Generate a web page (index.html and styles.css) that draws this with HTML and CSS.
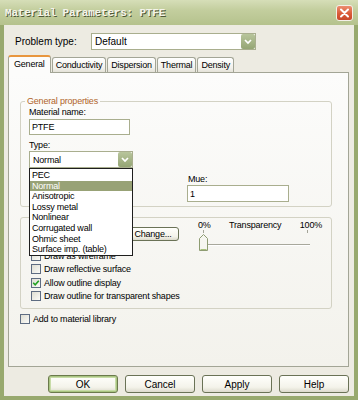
FILE: index.html
```html
<!DOCTYPE html>
<html>
<head>
<meta charset="utf-8">
<link rel="stylesheet" href="styles.css">
</head>
<body>
<div class="window">
  <div class="titlebar">
    <span class="title">Material Parameters: PTFE</span>
    <span class="close"><svg width="15" height="14" viewBox="0 0 15 14"><path d="M4 3.5 L11 10.5 M11 3.5 L4 10.5" stroke="#fff" stroke-width="2" stroke-linecap="round"/></svg></span>
  </div>
  <div class="client">
    <div class="problem-row">
      <span class="problem-label">Problem type:</span>
      <div class="combo combo-wide"><span class="combo-text">Default</span><span class="combo-btn"><svg width="14" height="15" viewBox="0 0 14 15"><path d="M4 6 L7 9 L10 6" fill="none" stroke="#fff" stroke-width="1.7"/></svg></span></div>
    </div>
    <div class="tabs">
      <div class="tab tab-active">General</div>
      <div class="tab">Conductivity</div>
      <div class="tab">Dispersion</div>
      <div class="tab">Thermal</div>
      <div class="tab">Density</div>
    </div>
    <div class="panel">
      <fieldset class="group group-general">
        <legend class="group-legend">General properties</legend>
        <span class="field-label">Material name:</span>
        <div class="text-input input-name">PTFE</div>
        <span class="field-label label-type">Type:</span>
        <div class="combo combo-type"><span class="combo-text">Normal</span><span class="combo-btn"><svg width="14" height="15" viewBox="0 0 14 15"><path d="M4 6 L7 9 L10 6" fill="none" stroke="#fff" stroke-width="1.7"/></svg></span></div>
        <div class="row-three">
          <div class="cell-empty"></div>
          <div class="cell-mue">
            <span class="field-label">Mue:</span>
            <div class="text-input input-mue">1</div>
          </div>
        </div>
      </fieldset>
      <div class="group group-display">
        <div class="display-top">
          <div class="btn btn-change">Change...</div>
          <div class="slider">
            <div class="slider-labels"><span>0%</span><span>Transparency</span><span>100%</span></div>
            <svg class="slider-svg" width="124" height="21" viewBox="0 0 124 21">
              <path d="M5.5 0 V3 M109.5 0 V3" stroke="#A4A498" stroke-width="1"/>
              <path d="M5 14.5 H112" stroke="#A8A89C" stroke-width="1"/>
              <path d="M5 15.5 H112" stroke="#FFFFFF" stroke-width="1"/>
              <polygon points="5.5,4.5 9.5,8.5 9.5,20.5 1.5,20.5 1.5,8.5" fill="#F6F6F0" stroke="#8E9C72" stroke-width="1"/>
              <path d="M2.5 19.5 H8.5" stroke="#A8C07C" stroke-width="1"/>
            </svg>
          </div>
        </div>
        <div class="check-row"><span class="cb"></span><span>Draw as wireframe</span></div>
        <div class="check-row"><span class="cb"></span><span>Draw reflective surface</span></div>
        <div class="check-row"><span class="cb cb-checked"><svg width="8" height="8" viewBox="0 0 8 8"><path d="M1.2 3.8 L3.2 5.8 L6.8 1.8" fill="none" stroke="#21A121" stroke-width="1.6"/></svg></span><span>Allow outline display</span></div>
        <div class="check-row"><span class="cb"></span><span>Draw outline for transparent shapes</span></div>
      </div>
      <div class="check-row check-lib"><span class="cb"></span><span>Add to material library</span></div>
    </div>
    <div class="buttons">
      <div class="btn btn-dialog btn-default">OK</div>
      <div class="btn btn-dialog">Cancel</div>
      <div class="btn btn-dialog">Apply</div>
      <div class="btn btn-dialog">Help</div>
    </div>
  </div>
  <ul class="dropdown">
    <li>PEC</li>
    <li class="selected">Normal</li>
    <li>Anisotropic</li>
    <li>Lossy metal</li>
    <li>Nonlinear</li>
    <li>Corrugated wall</li>
    <li>Ohmic sheet</li>
    <li>Surface imp. (table)</li>
  </ul>
</div>
</body>
</html>
```

FILE: styles.css
```css
* { box-sizing: border-box; }
html, body { margin: 0; padding: 0; }
body {
  width: 358px;
  height: 400px;
  overflow: hidden;
  font-family: "Liberation Sans", Arial, sans-serif;
  font-size: 9px;
  letter-spacing: -0.2px;
  color: #000;
  background: #EDEBE2;
}
.window {
  position: relative;
  width: 358px;
  height: 400px;
  display: flex;
  flex-direction: column;
}
.titlebar {
  height: 25px;
  flex: none;
  display: flex;
  align-items: center;
  justify-content: space-between;
  padding: 0 5px 0 5px;
  background: linear-gradient(#D6DEB8, #C3CE9E 40%, #B5C28D);
}
.title {
  font-family: "Liberation Mono", "DejaVu Sans Mono", monospace;
  font-weight: bold;
  font-size: 11px;
  letter-spacing: -0.2px;
  color: #F4F4EA;
  text-shadow: 1px 1px 0 #4E5836;
}
.close {
  width: 17px;
  height: 16px;
  border: 1px solid #F4F0E8;
  border-radius: 3px;
  background: linear-gradient(#EC8E70, #DA5A38 55%, #C8482A);
  display: flex;
  align-items: center;
  justify-content: center;
}
.client {
  flex: 1;
  display: flex;
  flex-direction: column;
  padding: 8px 0 3px 0;
  border: 4px solid #98A96E;
  border-top: none;
  background: #EDEBE2;
}
.problem-row {
  display: flex;
  align-items: center;
  height: 17px;
  padding-left: 11px;
  font-size: 10px;
  letter-spacing: 0;
}
.problem-label { width: 76px; }
.combo {
  height: 17px;
  border: 1px solid #A9AE8E;
  background: #fff;
  display: flex;
  align-items: center;
  justify-content: space-between;
}
.combo-text { padding-left: 3px; }
.combo-btn {
  width: 14px;
  height: 15px;
  border-radius: 2px;
  background: linear-gradient(#B8C59C, #A3B284 60%, #94A574);
  display: flex;
}
.combo-wide { width: 165px; }
.tabs {
  display: flex;
  align-items: flex-end;
  gap: 1px;
  height: 18px;
  margin: 5px 0 -1px 4px;
  position: relative;
  z-index: 1;
}
.tab {
  height: 15px;
  margin-bottom: 1px;
  padding: 0 3px;
  border: 1px solid #A3A596;
  border-bottom: none;
  border-radius: 3px 3px 0 0;
  background: linear-gradient(#FFFFFF, #F2F1EC 70%, #E4E2D8);
  display: flex;
  align-items: center;
}
.tab-active {
  height: 18px;
  margin-bottom: 0;
  padding: 0 5px 2px 5px;
  border-top: 2px solid #E8963E;
  background: #FCFCFB;
}
.panel {
  margin-left: 4px;
  width: 341px;
  height: 295px;
  border: 1px solid #A3A596;
  background: linear-gradient(#FCFCFB, #F3F2EC);
  padding: 23px 0 0 11px;
}
.group {
  width: 312px;
  margin: 0;
  border: 1px solid #D3D2C4;
  border-radius: 3px;
}
.group-general {
  padding: 0 8px 4px 8px;
}
.group-legend {
  padding: 0 2px;
  margin-left: -4px;
  line-height: 11px;
  color: #B0642A;
}
.field-label {
  display: block;
  line-height: 11px;
}
.text-input {
  border: 1px solid #A9AE8E;
  background: #fff;
  display: flex;
  align-items: center;
  padding-left: 2px;
}
.input-name {
  width: 101px;
  height: 16px;
  margin-top: 1px;
}
.label-type { margin-top: 5px; }
.combo-type { width: 104px; }
.row-three {
  display: grid;
  grid-template-columns: 104px 102px;
  column-gap: 54px;
  margin-top: 6px;
}
.input-mue {
  width: 102px;
  height: 17px;
}
.cell-mue .field-label { padding-left: 1px; }
.group-display {
  margin-top: 10px;
  padding: 0 0 5px 10px;
}
.display-top {
  height: 31px;
  display: flex;
  align-items: flex-start;
}
.btn {
  width: 70px;
  height: 18px;
  border: 1px solid #6A7256;
  border-radius: 3px;
  background: linear-gradient(#FFFFFC, #F4F3EA 70%, #DCDACC);
  display: flex;
  align-items: center;
  justify-content: center;
}
.btn-dialog {
  font-size: 10px;
  letter-spacing: 0;
}
.btn-change {
  width: 52px;
  height: 14px;
  margin: 9px 0 0 96px;
}
.btn-default {
  border-color: #6B7A4C;
  box-shadow: inset 0 0 0 1px #A9C582, inset 0 0 0 2px #C8DCA8;
}
.slider {
  width: 124px;
  margin-left: 19px;
  padding-top: 2px;
}
.slider-labels {
  display: flex;
  justify-content: space-between;
  line-height: 10px;
}
.slider-svg { display: block; }
.check-row {
  height: 13.5px;
  display: flex;
  align-items: center;
  gap: 3px;
}
.cb {
  width: 10px;
  height: 10px;
  flex: none;
  border: 1px solid #5E6C82;
  background: linear-gradient(135deg, #DEDDD2, #FBFBF8);
  display: flex;
  align-items: center;
  justify-content: center;
}
.check-lib {
  margin-top: 3px;
  height: 13px;
}
.buttons {
  display: flex;
  justify-content: flex-end;
  gap: 7px;
  margin-top: 8px;
  padding-right: 5px;
}
.dropdown {
  position: absolute;
  left: 29px;
  top: 168px;
  width: 104px;
  margin: 0;
  padding: 1px 0 0 0;
  list-style: none;
  border: 1px solid #1E1E1E;
  background: #fff;
}
.dropdown li {
  height: 10.6px;
  line-height: 10.6px;
  padding-left: 2px;
  white-space: nowrap;
}
.dropdown li.selected {
  background: #98A276;
  color: #fff;
}
```
